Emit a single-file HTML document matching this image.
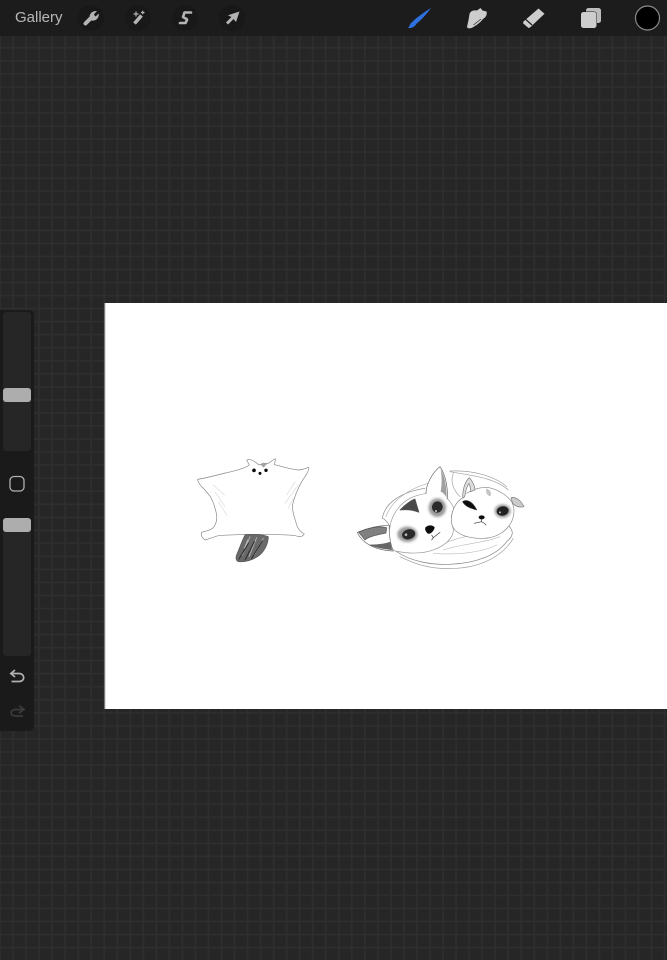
<!DOCTYPE html>
<html lang="en">
<head>
<meta charset="utf-8">
<title>Gallery</title>
<style>
html,body{margin:0;padding:0;background:#262626}
body{position:relative;width:667px;height:960px;overflow:hidden;font-family:"Liberation Sans",sans-serif}
#bar{position:absolute;left:0;top:0;width:667px;height:36px;background:#1c1c1c}
#gal{position:absolute;left:15px;top:9px;font-size:15px;line-height:18px;color:#b8b8b8}
#canvas{position:absolute;left:105px;top:303px;width:562px;height:406px;background:#fff}
#side{position:absolute;left:-6px;top:310px;width:40px;height:421px;background:#1a1a1a;border-radius:5px}
.track{position:absolute;left:3px;width:28px;background:#262626;border-radius:3px}
.thumb{position:absolute;left:3px;width:28px;height:14px;background:#adadad;border-radius:3px}
svg{position:absolute;left:0;top:0}
</style>
</head>
<body>
<svg width="667" height="960" viewBox="0 0 667 960">
<defs>
<pattern id="g" x="0" y="8.700" width="13.030" height="13.040" patternUnits="userSpaceOnUse">
<rect width="13.030" height="13.040" fill="#262626"/>
<path d="M13.030 0V13.040M0 13.040H13.030M0 0V13.040M0 0H13.030" stroke="#2e2e2e" stroke-width="1.600" fill="none"/>
</pattern>
</defs>
<rect x="0" y="0" width="667" height="960" fill="url(#g)"/>
</svg>
<div id="canvas"></div>
<div id="bar"></div>
<div id="gal">Gallery</div>
<div id="side"></div>
<div class="track" style="top:312px;height:139px"></div>
<div class="track" style="top:518px;height:138px"></div>
<div class="thumb" style="top:388px"></div>
<div class="thumb" style="top:518px"></div>
<svg width="667" height="960" viewBox="0 0 667 960">
<defs>
<filter id="b" x="-10%" y="-10%" width="120%" height="120%"><feGaussianBlur stdDeviation="1.100"/></filter>
<filter id="b2" x="-40%" y="-40%" width="180%" height="180%"><feGaussianBlur stdDeviation="4"/></filter>
<filter id="i" x="-20%" y="-20%" width="140%" height="140%"><feGaussianBlur stdDeviation=".35"/></filter>
</defs>
<!-- toolbar buttons -->
<g fill="#181818"><circle cx="91" cy="18" r="13"/><circle cx="138" cy="18" r="13"/><circle cx="185" cy="18" r="13"/><circle cx="232" cy="18" r="13"/></g>
<g filter="url(#i)">
<!-- wrench -->
<path d="M85.500 23.500 L92 17" stroke="#b4b4b4" stroke-width="4" stroke-linecap="round" fill="none"/>
<path d="M89.800 18.500 C88.800 14 92 10.500 97 11 L93.800 14.500 L95.500 16.500 L98.800 13.500 C99.300 18.500 95 21.500 91.500 20.500 Z" fill="#b4b4b4"/>
<!-- wand -->
<path d="M134.500 23.500 L141.500 15.500" stroke="#b4b4b4" stroke-width="3.600" fill="none"/>
<path d="M133.500 14 H138.500 M136 11.500 V16.500 M141 12.500 H144.500 M142.700 10.800 V14.200" stroke="#b4b4b4" stroke-width="1.200" fill="none"/>
<!-- selection S -->
<path d="M191 12.500 H184.500 L183 17 C184.500 18.500 187.500 18.500 187 20 L185.500 23 H180" stroke="#b4b4b4" stroke-width="2.600" stroke-linejoin="round" stroke-linecap="round" fill="none"/>
<!-- transform arrow -->
<path d="M227 23.500 L233.500 17" stroke="#b4b4b4" stroke-width="3" fill="none"/>
<path d="M239.500 11.500 L236 22 L232.300 17.500 L228 15.200 Z" fill="#b4b4b4"/>
<!-- brush -->
<path d="M431 8 C426 15 420 21 415.500 24.500 L412.500 21.500 C418 16.500 425 11.500 431 8 Z" fill="#2e6fe0"/>
<path d="M416 24.500 C414 27.500 411 28.500 407.800 27.800 C410 26.500 409.500 24 411.500 22.500 C413 21.300 415.500 22.600 416 24.500 Z" fill="#2e6fe0"/>
<!-- smudge -->
<path d="M467 27 L468.500 20 L469.500 14 C470.500 10.500 474.500 10 477 10.500 L480.500 8 L482.500 10.500 L486.500 11.500 C487.500 15 485.500 17.500 483 19 C480 23 476 25.500 472.500 27.500 C470 28.800 467.500 28.500 467 27 Z" fill="#cdcdcd"/>
<path d="M473.500 25 L481 19" stroke="#1c1c1c" stroke-width=".6" fill="none"/>
<!-- eraser -->
<path d="M538.500 8.500 L544.500 13.800 L530 27.500 L528.500 28 L523 23.200 L523.500 21.500 Z" fill="#cdcdcd"/>
<path d="M525 18.800 L532 25" stroke="#1c1c1c" stroke-width="1.300" fill="none"/>
<!-- layers -->
<rect x="586" y="8" width="15" height="15" rx="2.500" fill="#bdbdbd"/>
<rect x="580" y="11.500" width="17" height="17" rx="3" fill="#1c1c1c"/>
<rect x="581" y="12" width="15.500" height="16" rx="2.500" fill="#cdcdcd"/>
</g>
<!-- colour -->
<circle cx="647.500" cy="18" r="12" fill="#000" stroke="#8a8a8a" stroke-width="1.200"/>
<!-- sidebar icons -->
<rect x="10" y="476.500" width="14" height="14.500" rx="4" fill="none" stroke="#b0b0b0" stroke-width="1.300"/>
<g filter="url(#i)">
<path d="M11 673.500 H19 C25 673.500 25.500 681.500 19 681.500 H11.500 M15 670 L10.800 673.500 L15 677" fill="none" stroke="#b0b0b0" stroke-width="1.700"/>
<path d="M24 709.500 H16 C9.500 709.500 9.500 716 15.500 716 H23 M19 705.500 L24 709.500 L19 713" fill="none" stroke="#3b3b3b" stroke-width="1.700"/>
</g>

<!-- canvas edge -->
<rect x="104.300" y="303" width="1" height="406" fill="#9a9a9a"/>

<!-- glider -->
<g transform="translate(185 445) scale(.3333)" fill="none" stroke="#858585" stroke-width="2" stroke-linecap="round" stroke-linejoin="round" filter="url(#b)">
<path d="M38 103 C60 100 105 88 150 77 C170 72 185 66 193 60 C190 54 187 49 185 45 C195 41 205 45 222 60 L235 55 L250 55 C258 50 264 44 271 41 C271 48 270 54 268 59 C285 62 310 72 340 75 C352 75 362 70 371 67 C375 72 364 90 350 110 C338 132 328 155 322 182 C322 205 332 228 337 245 C343 258 350 263 358 267 C352 276 345 276 338 274 C320 268 290 270 250 268 L180 268 C150 270 120 270 100 272 C85 276 72 282 60 285 C52 280 46 270 50 262 C60 258 75 258 85 248 C95 235 97 220 94 205 C90 185 85 172 78 158 C68 143 55 130 50 125 C44 118 38 110 38 103 Z"/>
<path d="M225 58 L235 53 L247 56 L236 68 Z" fill="#a5a5a5" stroke="none"/>
<g stroke="#e6e6e6" stroke-width="3"><path d="M85 120 L118 150 M90 140 L120 185 M100 170 L125 210 M305 150 L330 110 M300 175 L340 120 M310 190 L325 160"/></g>
<path d="M180 270 C200 266 230 268 250 275 C250 295 240 318 222 332 C205 345 180 352 160 350 C150 345 152 335 158 322 C165 305 172 285 180 270 Z" fill="#6a6a6a" stroke="#555"/>
<g stroke="#b8b8b8" stroke-width="2.500"><path d="M195 275 L172 330 M215 278 L192 335 M235 280 L208 330 M188 285 L178 310"/></g>
<g stroke="#2c2c2c" stroke-width="3"><path d="M162 342 L190 295 M180 345 L208 290 M200 340 L232 288"/></g>
<g fill="#111" stroke="none"><circle cx="207" cy="76" r="5.500"/><circle cx="243" cy="76" r="5"/><circle cx="225" cy="85" r="4.500"/></g>
</g>

<!-- cats -->
<g transform="translate(350 455) scale(.3333)" fill="none" stroke="#858585" stroke-width="2" stroke-linecap="round" stroke-linejoin="round" filter="url(#b)">
<path d="M225 100 C160 110 105 140 97 190 C103 190 115 205 120 215" stroke="#888"/>
<path d="M235 85 C180 100 125 135 108 185" stroke="#b0b0b0"/>
<path d="M300 48 C360 45 430 60 470 95 M310 55 C300 80 310 105 330 125 M300 50 C350 60 430 65 475 105" stroke="#a0a0a0"/>
<path d="M470 205 C490 225 495 240 470 260 C440 300 380 325 300 328 C240 330 180 318 140 290" stroke="#808080"/>
<path d="M150 305 C200 330 250 345 320 340 C400 335 460 300 490 250" stroke="#a0a0a0"/>
<path d="M250 280 C320 240 400 240 470 215 M280 285 C340 265 400 265 450 245 M250 295 C310 300 390 295 440 270" stroke="#bcbcbc"/>
<!-- left cat head -->
<path d="M180 130 C195 122 212 118 232 115 C262 112 285 120 300 140 C308 150 312 158 310 165 C302 180 302 200 310 222 C312 245 290 270 250 285 C215 298 170 295 135 288 C120 280 112 250 120 215 C125 180 150 145 180 130 Z" fill="#fff" stroke="#999"/>
<path d="M228 115 C228 90 245 55 270 35 C284 55 294 90 292 130" fill="#fff" stroke="#666"/>
<path d="M272 42 C284 62 290 95 290 128 C284 118 278 112 272 110 C276 88 276 65 272 42 Z" fill="#a0a0a0" stroke="none"/>
<path d="M150 165 C165 148 185 135 195 132 L207 172 C190 165 170 163 150 165 Z" fill="#4a4a4a" stroke="#555"/>
<!-- left ear -->
<path d="M118 212 C90 210 50 220 22 232 C35 262 70 285 130 288 C122 270 116 240 118 212 Z" fill="#fff" stroke="#666"/>
<path d="M26 232 C55 218 90 212 110 218 L108 234 C80 240 55 245 45 255 Z" fill="#808080" stroke="#555"/>
<path d="M60 270 C80 278 105 282 125 284 L120 262 C100 268 80 270 60 270 Z" fill="#666" stroke="#666"/>
<!-- eyes left cat -->
<ellipse cx="172" cy="238" rx="30" ry="23" fill="#999" stroke="none" filter="url(#b2)"/>
<ellipse cx="176" cy="238" rx="20" ry="15" fill="#2a2a2a" stroke="none" transform="rotate(-15 176 238)"/>
<circle cx="168" cy="239" r="4" fill="#bbb" stroke="none"/>
<ellipse cx="262" cy="158" rx="26" ry="28" fill="#999" stroke="none" filter="url(#b2)"/>
<ellipse cx="262" cy="156" rx="16" ry="17" fill="#2a2a2a" stroke="none" transform="rotate(15 262 156)"/>
<circle cx="258" cy="168" r="3" fill="#ccc" stroke="none"/>
<!-- nose left cat -->
<path d="M226 218 C234 208 250 210 254 218 C252 228 242 238 234 236 C228 232 224 224 226 218 Z" fill="#0c0c0c" stroke="none"/>
<path d="M245 240 L250 248 L270 232 M250 248 L245 255" stroke="#333"/>
<!-- right cat -->
<path d="M335 130 C308 150 298 190 308 215 C320 240 360 252 400 250 C440 250 480 225 490 185 C495 165 490 150 485 140 C470 120 440 100 410 97 C385 98 370 103 350 115" fill="#fff" stroke="#888"/>
<path d="M338 130 C338 100 345 80 358 68 C368 78 375 95 375 105 L362 110 C362 100 360 92 357 85 C350 95 346 112 344 125 Z" fill="#ddd" stroke="#777"/>
<path d="M483 128 C497 125 512 135 522 155 C510 158 498 155 488 145 Z" fill="#ccc" stroke="#777"/>
<path d="M410 100 C420 105 428 115 420 124 C410 120 405 110 410 100 Z" fill="#c5c5c5" stroke="none"/>
<path d="M338 140 C350 132 368 140 380 165 C365 160 345 155 338 140 Z" fill="#111" stroke="#222"/>
<ellipse cx="458" cy="168" rx="24" ry="20" fill="#999" stroke="none" filter="url(#b2)"/>
<ellipse cx="458" cy="168" rx="18" ry="14" fill="#222" stroke="none" transform="rotate(-10 458 168)"/>
<circle cx="450" cy="172" r="3" fill="#bbb" stroke="none"/>
<ellipse cx="395" cy="187" rx="9" ry="6" fill="#111" stroke="none"/>
<path d="M395 193 L394 200 L373 205 M394 200 C400 202 405 206 408 210" stroke="#333"/>
</g>
</svg>
</body>
</html>
